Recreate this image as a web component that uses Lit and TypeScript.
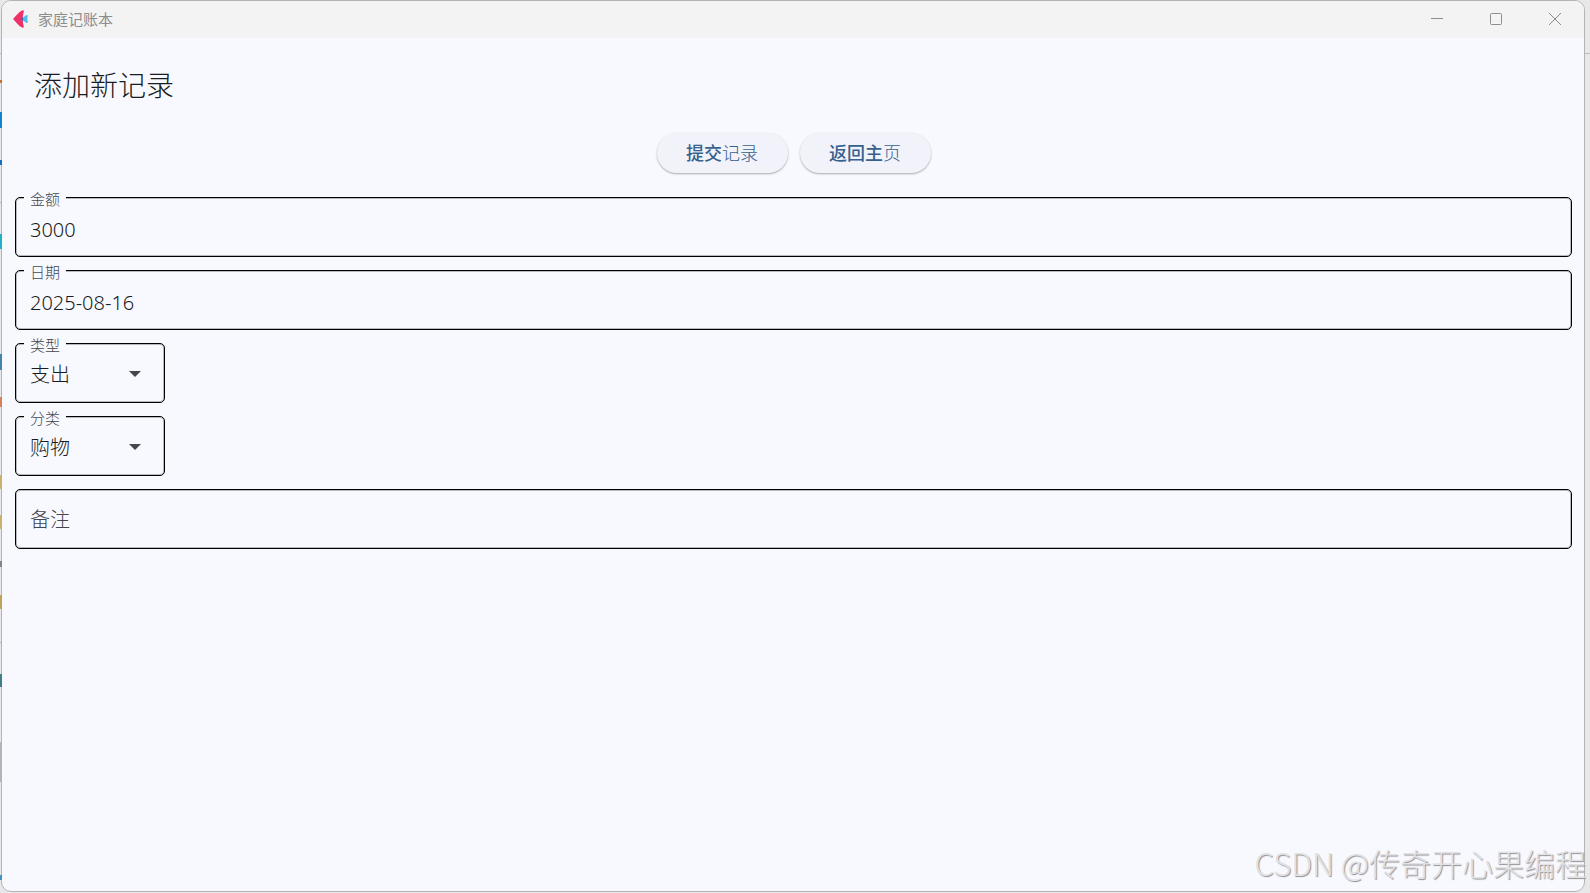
import { LitElement, html, css, svg } from "lit";
import { customElement, state } from "lit/decorators.js";

interface Choice {
  id: string;
  label: string;
  options: string[];
}

const choices: Choice[] = [
  { id: "type", label: "类型", options: ["支出", "收入"] },
  { id: "category", label: "分类", options: ["购物", "餐饮", "交通", "住房"] },
];

const logo = svg`
  <path d="M0 9 C2.5 6.5 6 1.6 9.6 0.3 Q11 0 10.8 1.4 Q8.6 9 10.8 16.6 Q11 18 9.6 17.7 C6 16.4 2.5 11.5 0 9Z" fill="#ee3167"/>
  <path d="M7.6 9 L13.6 5 Q15 4.6 14.7 6 Q14 9 14.7 12 Q15 13.4 13.6 13Z" fill="#55bdec"/>
  <path d="M7.6 9 L10 7.3 Q9.6 9 10 10.7Z" fill="#3a50a0"/>`;

@customElement("app-root")
export class AppRoot extends LitElement {
  @state() private amount = "3000";
  @state() private date = "2025-08-16";

  static styles = css`
    :host {
      display: block;
      box-sizing: border-box;
      position: relative;
      min-height: 100vh;
      padding: 0 5px 1px 1px;
      background: linear-gradient(#e8e8e8 53px, #bcbcbc 53px 54px, #e8e8e8 54px);
      font-family: "Noto Sans", "Noto Sans CJK SC", sans-serif;
      color: #191c20;
    }
    /* Slivers of the desktop showing past the window's left edge */
    :host::before {
      content: "";
      position: absolute;
      left: 0;
      top: 0;
      bottom: 0;
      width: 2px;
      pointer-events: none;
      background: linear-gradient(
        transparent 80px, #c8702c 80px 83px, transparent 83px 112px,
        #1583cc 112px 128px, transparent 128px 160px,
        #1670c0 160px 165px, transparent 165px 202px,
        #b4b4b4 202px 203px, transparent 203px 234px,
        #25aec8 234px 249px, transparent 249px 354px,
        #4384ad 354px 370px, transparent 370px 397px,
        #d8805c 397px 407px, transparent 407px 475px,
        #c8b070 475px 489px, transparent 489px 515px,
        #c8b070 515px 529px, transparent 529px 561px,
        #858585 561px 567px, transparent 567px 595px,
        #c0a258 595px 609px, transparent 609px 642px,
        #b4b4b4 642px 643px, transparent 643px 674px,
        #417f88 674px 687px, transparent 687px 742px,
        #b4b4b4 742px 782px, transparent 782px 875px,
        #3f94c4 875px 880px, transparent 880px
      );
    }
    * { box-sizing: border-box; }
    .window {
      display: flex;
      flex-direction: column;
      min-height: calc(100vh - 1px);
      border: 1px solid #b4b4b4;
      border-radius: 10px;
      overflow: hidden;
      background: #f8f9ff;
    }
    .titlebar {
      display: flex;
      align-items: center;
      height: 37px;
      padding: 0 0 2px 11px;
      background: #f3f3f3;
      color: #8c8c8c;
      font-size: 15px;
    }
    .logo { width: 15px; height: 18px; margin-right: 10px; }
    .app-name { flex: 1; line-height: 20px; }
    .caption {
      display: grid;
      place-items: center;
      width: 59px;
      height: 35px;
      padding: 0;
      border: 0;
      background: none;
      color: #8c8c8c;
    }
    .page { padding: 26px 12px 12px 13px; }
    h1 {
      margin: 0 0 27px;
      padding-left: 19px;
      font-size: 28px;
      line-height: 42px;
      font-weight: 300;
    }
    .actions {
      display: flex;
      justify-content: center;
      gap: 12px;
      margin-bottom: 24px;
    }
    .action {
      width: 131px;
      height: 40px;
      padding: 0;
      border: 0;
      border-radius: 20px;
      background: #f2f3fa;
      box-shadow: 0 1px 2px rgba(0, 0, 0, 0.32);
      color: #36618e;
      font: 300 18px/40px "Noto Sans", "Noto Sans CJK SC", sans-serif;
    }
    .action b { font-weight: 500; }
    form { display: grid; gap: 13px; }
    .field {
      position: relative;
      height: 60px;
      border: 1px solid #000;
      border-radius: 5px;
      box-shadow: inset 0 0 0 1px #b8b9be;
    }
    .field.short { width: 150px; }
    .label {
      position: absolute;
      left: 8px;
      top: -9px;
      padding: 0 6px;
      background: #f8f9ff;
      color: #43474e;
      font-size: 15px;
      line-height: 20px;
      font-weight: 300;
    }
    .control {
      display: block;
      width: 100%;
      height: 58px;
      padding: 4px 14px 0;
      border: 0;
      outline: 0;
      appearance: none;
      background: transparent;
      color: #191c20;
      font: 300 20px/28px "Noto Sans", "Noto Sans CJK SC", sans-serif;
    }
    .control.note { padding-top: 0; }
    .control::placeholder { color: #43474e; opacity: 1; }
    .arrow {
      position: absolute;
      right: 23px;
      top: 27px;
      width: 12px;
      height: 6px;
      fill: #43474e;
      pointer-events: none;
    }
    .watermark {
      position: absolute;
      right: 4px;
      bottom: 8px;
      color: #e2e2e4;
      text-shadow: 1px 1px 1px #8f8f93;
      font: 300 31px/44px "Noto Sans CJK SC", sans-serif;
      pointer-events: none;
    }
  `;

  private renderChoice(c: Choice) {
    return html`
      <div class="field short">
        <label class="label" for=${c.id}>${c.label}</label>
        <select class="control" id=${c.id}>
          ${c.options.map((o) => html`<option>${o}</option>`)}
        </select>
        <svg class="arrow" viewBox="0 0 12 6" aria-hidden="true"><path d="M0 0H12L6 6Z" /></svg>
      </div>`;
  }

  render() {
    return html`
      <div class="window">
        <header class="titlebar">
          <svg class="logo" viewBox="0 0 15 18" aria-hidden="true">${logo}</svg>
          <span class="app-name">家庭记账本</span>
          <button class="caption" aria-label="最小化">
            <svg width="12" height="12" fill="none" stroke="currentColor"><path d="M0 5.5H12" /></svg>
          </button>
          <button class="caption" aria-label="最大化">
            <svg width="12" height="12" fill="none" stroke="currentColor"><rect x=".5" y=".5" width="11" height="11" rx="1" /></svg>
          </button>
          <button class="caption" aria-label="关闭">
            <svg width="12" height="12" fill="none" stroke="currentColor"><path d="M0 0L12 12M12 0L0 12" /></svg>
          </button>
        </header>
        <main class="page">
          <h1>添加新记录</h1>
          <div class="actions">
            <button class="action" type="submit" form="record"><b>提交</b>记录</button>
            <button class="action" type="button"><b>返回主</b>页</button>
          </div>
          <form id="record" @submit=${(e: Event) => e.preventDefault()}>
            <div class="field">
              <label class="label" for="amount">金额</label>
              <input class="control" id="amount" .value=${this.amount}
                @input=${(e: Event) => (this.amount = (e.target as HTMLInputElement).value)} />
            </div>
            <div class="field">
              <label class="label" for="date">日期</label>
              <input class="control" id="date" .value=${this.date}
                @input=${(e: Event) => (this.date = (e.target as HTMLInputElement).value)} />
            </div>
            ${choices.map((c) => this.renderChoice(c))}
            <div class="field">
              <input class="control note" id="note" aria-label="备注" placeholder="备注" />
            </div>
          </form>
        </main>
      </div>
      <div class="watermark">CSDN @传奇开心果编程</div>
    `;
  }
}
